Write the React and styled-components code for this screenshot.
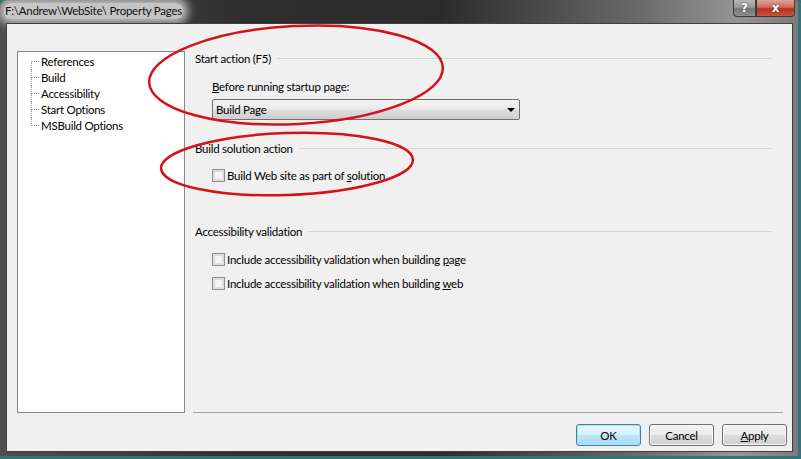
import styled, { createGlobalStyle } from "styled-components";

const GlobalStyle = createGlobalStyle`
  html, body {
    margin: 0;
    padding: 0;
    background: #2f6f78;
  }
  body {
    font-family: Lato, "Noto Sans", sans-serif;
    font-size: 11.5px;
    letter-spacing: -0.25px;
    color: #000;
  }
`;

const Window = styled.div`
  position: relative;
  width: 801px;
  height: 459px;
  box-sizing: border-box;
  display: flex;
  flex-direction: column;
  border-radius: 6px 6px 0 0;
  background: linear-gradient(to right, #4f4f4f 0%, #2f2f2f 30%, #2b2b2b 55%, #6a6a6a 80%, #959595 92%, #7a7a7a 100%);
  box-shadow: inset -3px -3px 0 #35737c;
  overflow: hidden;
`;

const TitleBar = styled.div`
  height: 23px;
  display: flex;
  align-items: flex-start;
  justify-content: space-between;
  padding-left: 4px;
`;

const Title = styled.span`
  margin-top: 3px;
  line-height: 16px;
  font-size: 11.5px;
  color: #111;
  background: rgba(230, 230, 230, 0.8);
  box-shadow: 0 0 8px 5px rgba(230, 230, 230, 0.75);
  border-radius: 6px;
  padding: 0 1px;
`;

const CaptionButtons = styled.div`
  display: flex;
  margin-right: 6px;
`;

const CaptionButton = styled.div`
  width: ${(p) => p.$w}px;
  height: 17px;
  box-sizing: border-box;
  display: flex;
  align-items: center;
  justify-content: center;
  color: #fff;
  font-family: "DejaVu Sans", sans-serif;
  font-weight: bold;
  font-size: 12px;
  letter-spacing: 0;
  text-shadow: 0 0 2px #333;
  border: 1px solid #3b3b3b;
  border-top: none;
  background: ${(p) =>
    p.$close
      ? "linear-gradient(#dea29a 0%, #cf6a5d 45%, #b8301c 55%, #c9553f 100%)"
      : "linear-gradient(#b8b8b8 0%, #9a9a9a 45%, #767676 55%, #8f8f8f 100%)"};
  border-radius: ${(p) => (p.$close ? "0 0 4px 0" : "0 0 0 4px")};
`;

const Client = styled.div`
  flex: 1;
  margin: 0 8px 7px 6px;
  border: 1px solid #404040;
  background: #f0f0f0;
  display: flex;
  flex-direction: column;
  padding: 27px 5px 0 10px;
`;

const Main = styled.div`
  display: flex;
  height: 362px;
  margin-right: 4px;
`;

const Tree = styled.div`
  width: 168px;
  box-sizing: border-box;
  background: #fff;
  border: 1px solid #828790;
  padding: 2px 0 0 13px;
`;

const TreeRow = styled.div`
  display: flex;
  height: 16px;
  align-items: stretch;
`;

const Branch = styled.div`
  width: 8px;
  margin-right: 2px;
  display: flex;
  flex-direction: column;
`;

const BranchTop = styled.div`
  height: 7px;
  border-left: 1px dotted ${(p) => (p.$first ? "transparent" : "#a0a0a0")};
  border-bottom: 1px dotted #a0a0a0;
`;

const BranchBottom = styled.div`
  height: 8px;
  border-left: 1px dotted ${(p) => (p.$last ? "transparent" : "#a0a0a0")};
`;

const TreeLabel = styled.span`
  line-height: 16px;
`;

const Page = styled.div`
  flex: 1;
  padding-left: 10px;
  position: relative;
  &::after {
    content: "";
    position: absolute;
    left: 8px;
    right: 0;
    bottom: 0;
    border-bottom: 1px solid #a0a0a0;
  }
`;

const Heading = styled.div`
  display: flex;
  align-items: center;
  line-height: 15px;
  margin-top: ${(p) => p.$top}px;
  margin-right: 11px;
  &::after {
    content: "";
    flex: 1;
    height: 1px;
    margin-left: 6px;
    background: #d5d5d5;
  }
`;

const Indent = styled.div`
  padding-left: 17px;
  margin-top: ${(p) => p.$top}px;
`;

const FieldLabel = styled.div`
  line-height: 15px;
`;

const Combo = styled.div`
  margin-top: 5px;
  width: 308px;
  height: 21px;
  box-sizing: border-box;
  border: 1px solid #707070;
  border-radius: 2px;
  background: linear-gradient(#f2f2f2 0%, #ebebeb 48%, #dddddd 52%, #cfcfcf 100%);
  display: flex;
  align-items: center;
  justify-content: space-between;
  padding: 0 4px 0 3px;
`;

const Arrow = styled.span`
  width: 0;
  height: 0;
  border-left: 4px solid transparent;
  border-right: 4px solid transparent;
  border-top: 4px solid #000;
`;

const CheckRow = styled.label`
  display: flex;
  align-items: center;
  height: 16px;
  gap: 2px;
`;

const Box = styled.span`
  width: 13px;
  height: 13px;
  box-sizing: border-box;
  border: 1px solid #8e8f8f;
  background: #f4f4f4;
  box-shadow: inset 0 0 0 2px #dedede;
`;

const Footer = styled.div`
  display: flex;
  justify-content: flex-end;
  gap: 8px;
  padding-top: 11px;
`;

const Button = styled.div`
  width: 65px;
  height: 22px;
  box-sizing: border-box;
  border-radius: 3px;
  display: flex;
  align-items: center;
  justify-content: center;
  border: 1px solid ${(p) => (p.$default ? "#3c7fb1" : "#707070")};
  background: ${(p) =>
    p.$default
      ? "linear-gradient(#eaf6fd 0%, #d9f0fc 48%, #bee6fd 52%, #a7d9f5 100%)"
      : "linear-gradient(#f2f2f2 0%, #ebebeb 48%, #dddddd 52%, #cfcfcf 100%)"};
  box-shadow: inset 0 0 0 1px ${(p) => (p.$default ? "#a8e0f8" : "#fbfbfb")};
`;

const Marks = styled.svg`
  position: absolute;
  left: 0;
  top: 0;
  pointer-events: none;
`;

const treeItems = ["References", "Build", "Accessibility", "Start Options", "MSBuild Options"];

export default function App() {
  return (
    <>
      <GlobalStyle />
      <Window>
        <TitleBar>
          <Title>F:\Andrew\WebSite\ Property Pages</Title>
          <CaptionButtons>
            <CaptionButton $w={23}>?</CaptionButton>
            <CaptionButton $w={39} $close>
              x
            </CaptionButton>
          </CaptionButtons>
        </TitleBar>
        <Client>
          <Main>
            <Tree>
              {treeItems.map((item, i) => (
                <TreeRow key={item}>
                  <Branch>
                    <BranchTop $first={i === 0} />
                    <BranchBottom $last={i === treeItems.length - 1} />
                  </Branch>
                  <TreeLabel>{item}</TreeLabel>
                </TreeRow>
              ))}
            </Tree>
            <Page>
              <Heading $top={0}>Start action (F5)</Heading>
              <Indent $top={13}>
                <FieldLabel>
                  <u>B</u>efore running startup page:
                </FieldLabel>
                <Combo>
                  <span>Build Page</span>
                  <Arrow />
                </Combo>
              </Indent>
              <Heading $top={21}>Build solution action</Heading>
              <Indent $top={11}>
                <CheckRow>
                  <Box />
                  <span>
                    Build Web site as part of <u>s</u>olution
                  </span>
                </CheckRow>
              </Indent>
              <Heading $top={41}>Accessibility validation</Heading>
              <Indent $top={12}>
                <CheckRow>
                  <Box />
                  <span>
                    Include accessibility validation when building <u>p</u>age
                  </span>
                </CheckRow>
              </Indent>
              <Indent $top={8}>
                <CheckRow>
                  <Box />
                  <span>
                    Include accessibility validation when building <u>w</u>eb
                  </span>
                </CheckRow>
              </Indent>
            </Page>
          </Main>
          <Footer>
            <Button $default>OK</Button>
            <Button>Cancel</Button>
            <Button>
              <span>
                <u>A</u>pply
              </span>
            </Button>
          </Footer>
        </Client>
        <Marks width="801" height="459" viewBox="0 0 801 459">
          <ellipse cx="296" cy="75" rx="147" ry="49" transform="rotate(-3 296 75)" fill="none" stroke="#d4121c" strokeWidth="2.5" />
          <ellipse cx="287" cy="164" rx="126" ry="31" transform="rotate(-2 287 164)" fill="none" stroke="#d4121c" strokeWidth="2.5" />
        </Marks>
      </Window>
    </>
  );
}
